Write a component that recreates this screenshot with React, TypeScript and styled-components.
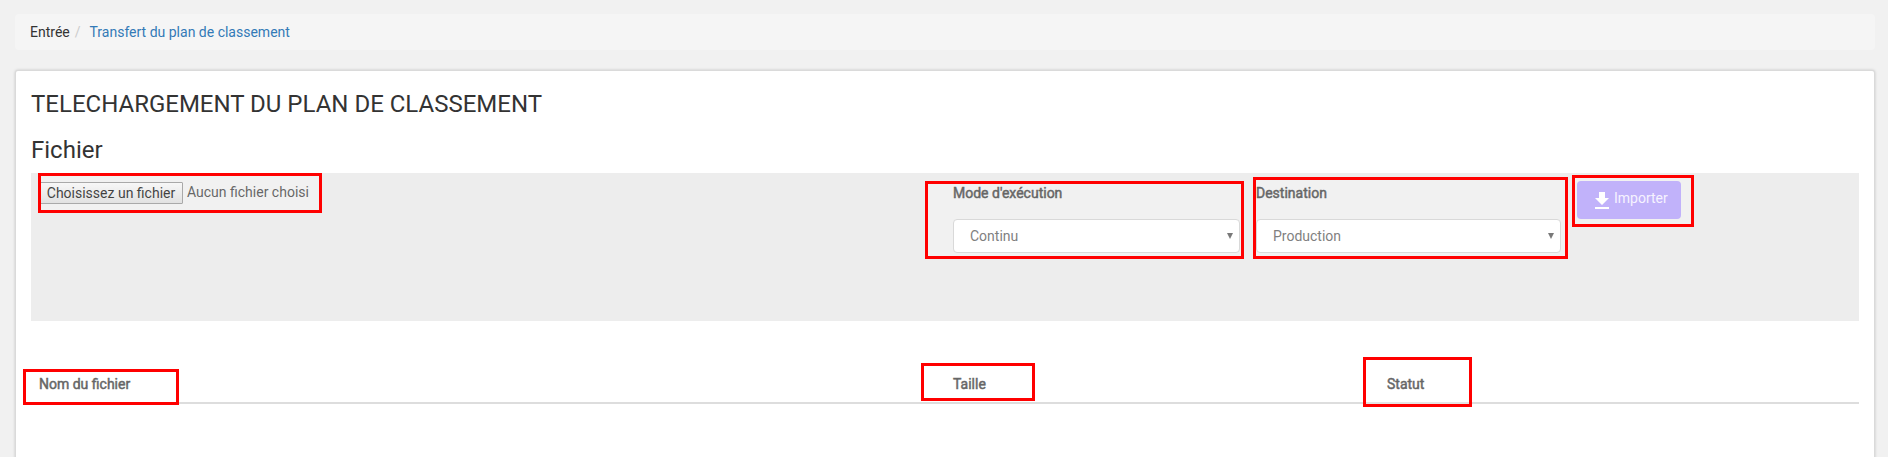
import React from "react";
import styled, { createGlobalStyle } from "styled-components";

const GlobalStyle = createGlobalStyle`
  * { box-sizing: border-box; }
  body {
    margin: 0;
    background: #f1f1f1;
    color: #333;
    font: 14px/20px Roboto, "Liberation Sans", sans-serif;
    overflow: hidden;
  }
`;

const Page = styled.div`
  position: relative;
  height: 457px;
  overflow: hidden;
  padding: 14px 13px 0 15px;
`;

const Breadcrumb = styled.nav`
  display: flex;
  align-items: center;
  height: 36px;
  padding: 0 15px;
  border-radius: 4px;
  background: #f5f5f5;
  color: #333;
`;

const Separator = styled.span`
  padding: 0 9px 0 5px;
  color: #ccc;
`;

const Link = styled.a`
  color: #337ab7;
  text-decoration: none;
`;

const Panel = styled.main`
  margin: 21px 0 0 1px;
  width: 1858px;
  height: 420px;
  padding: 19px 15px 0;
  border-radius: 2px;
  background: #fff;
  box-shadow: 0 0 0 1px #dadada, 0 0 3px 1px rgba(0, 0, 0, 0.18);
`;

const Title = styled.h1`
  margin: 0 0 18px;
  color: #333;
  font-size: 24px;
  font-weight: 400;
  line-height: 28px;
`;

const Subtitle = styled(Title).attrs({ as: "h2" })`
  margin-bottom: 9px;
`;

const UploadArea = styled.section`
  display: grid;
  grid-template-columns: 922px 303px 321px auto;
  justify-content: start;
  height: 148px;
  background: #ededed;
`;

const FilePicker = styled.div`
  display: flex;
  align-items: flex-start;
  padding: 9px 0 0 8px;
`;

const FileButton = styled.button`
  width: 144px;
  height: 22px;
  padding: 0;
  border: 1px solid #8d8d8d;
  border-radius: 1px;
  background: linear-gradient(#f5f5f5, #d8d8d8);
  color: #000;
  font: inherit;
  line-height: 18px;
  white-space: nowrap;
`;

const FileStatus = styled.span`
  margin: 0 0 0 4px;
  line-height: 20px;
`;

const Field = styled.div<{ $width: number }>`
  width: ${(p) => p.$width}px;
  padding-top: 10px;
`;

const Label = styled.label`
  display: block;
  margin-bottom: 16px;
  font-weight: 400;
  -webkit-text-stroke: 0.5px #333;
`;

const Select = styled.div`
  display: flex;
  align-items: center;
  justify-content: space-between;
  height: 34px;
  padding: 0 6px 0 16px;
  border: 1px solid #ccc;
  border-radius: 4px;
  background: #fff;
  color: #555;
`;

const Arrow = styled.svg`
  width: 6px;
  height: 6px;
  fill: #4d4d4d;
`;

const ImportButton = styled.button`
  display: flex;
  align-items: flex-start;
  width: 104px;
  height: 38px;
  margin-top: 8px;
  padding: 8px 0 0 13px;
  border: 0;
  border-radius: 4px;
  background: #ac98f9;
  color: #f3efff;
  font: inherit;
  line-height: 18px;
`;

const DownloadIcon = styled.svg`
  width: 24px;
  height: 24px;
  fill: #fff;
`;

const TableHead = styled.div`
  display: grid;
  grid-template-columns: 914px 434px 1fr;
  margin-top: 45px;
  height: 38px;
  border-bottom: 2px solid #ddd;
`;

const HeadCell = styled.div`
  padding: 8px;
  line-height: 20px;
  -webkit-text-stroke: 0.5px #333;
`;

const Marker = styled.div<{ $x: number; $y: number; $w: number; $h: number }>`
  position: absolute;
  left: ${(p) => p.$x}px;
  top: ${(p) => p.$y}px;
  width: ${(p) => p.$w}px;
  height: ${(p) => p.$h}px;
  border: 3px solid #f00;
  background: rgba(255, 255, 255, 0.25);
  pointer-events: none;
`;

const markers = [
  [38, 173, 284, 40],
  [925, 181, 319, 78],
  [1253, 177, 315, 82],
  [1572, 175, 122, 52],
  [23, 369, 156, 36],
  [921, 363, 114, 38],
  [1363, 357, 109, 50],
];

function SelectField({ label, value, width }: { label: string; value: string; width: number }) {
  return (
    <Field $width={width}>
      <Label>{label}</Label>
      <Select>
        {value}
        <Arrow viewBox="0 0 6 6">
          <path d="M0 0h6L3 6z" />
        </Arrow>
      </Select>
    </Field>
  );
}

export default function App() {
  return (
    <Page>
      <GlobalStyle />
      <Breadcrumb>
        <span>Entrée</span>
        <Separator>/</Separator>
        <Link>Transfert du plan de classement</Link>
      </Breadcrumb>
      <Panel>
        <Title>TELECHARGEMENT DU PLAN DE CLASSEMENT</Title>
        <Subtitle>Fichier</Subtitle>
        <UploadArea>
          <FilePicker>
            <FileButton>Choisissez un fichier</FileButton>
            <FileStatus>Aucun fichier choisi</FileStatus>
          </FilePicker>
          <SelectField label="Mode d'exécution" value="Continu" width={287} />
          <SelectField label="Destination" value="Production" width={305} />
          <ImportButton>
            <DownloadIcon viewBox="0 0 24 24">
              <path d="M19 9h-4V3H9v6H5l7 7 7-7zM5 18v2h14v-2H5z" />
            </DownloadIcon>
            Importer
          </ImportButton>
        </UploadArea>
        <TableHead>
          <HeadCell>Nom du fichier</HeadCell>
          <HeadCell>Taille</HeadCell>
          <HeadCell>Statut</HeadCell>
        </TableHead>
      </Panel>
      {markers.map(([x, y, w, h]) => (
        <Marker key={x} $x={x} $y={y} $w={w} $h={h} />
      ))}
    </Page>
  );
}
